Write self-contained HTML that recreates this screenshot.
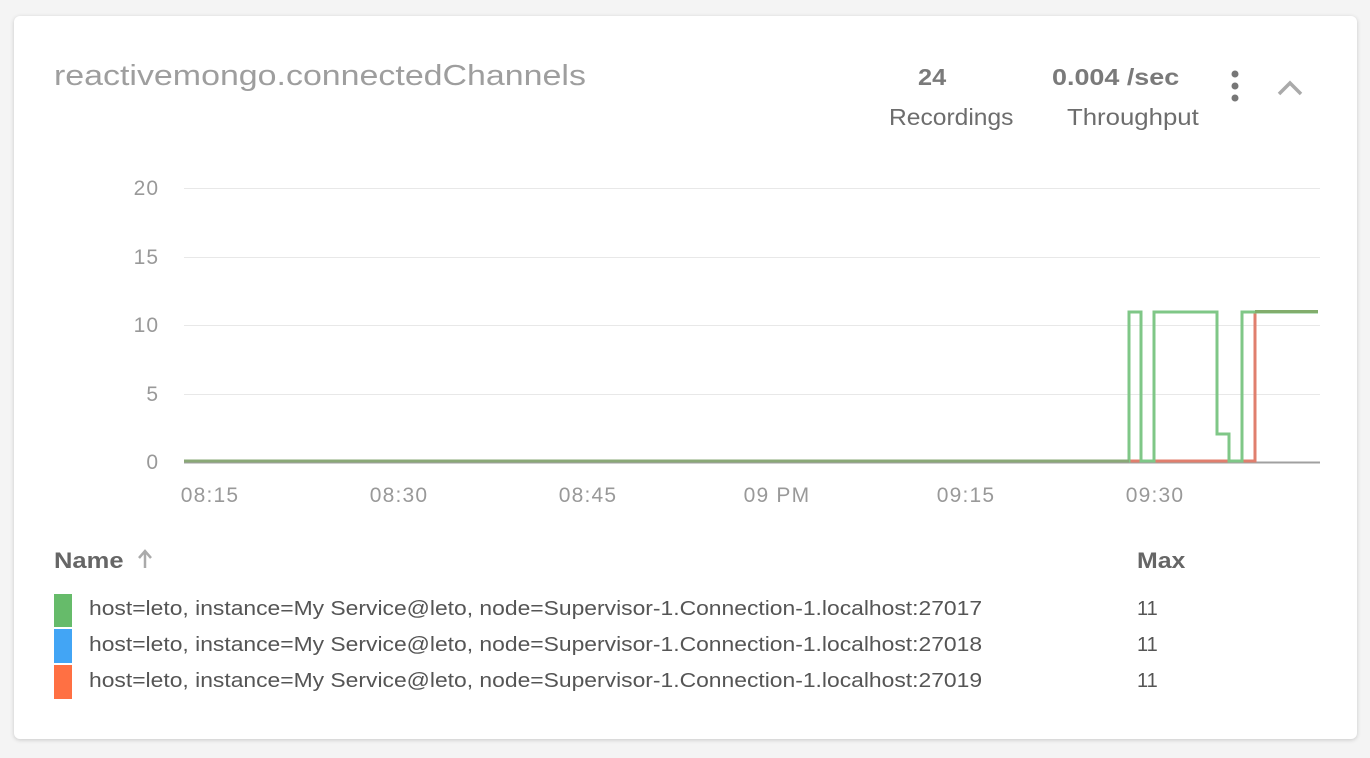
<!DOCTYPE html>
<html><head><style>
body{margin:0;background:#f4f4f4;font-family:"Liberation Sans",sans-serif;width:1370px;height:758px;overflow:hidden;position:relative}
.card{position:absolute;left:14px;top:16px;width:1343px;height:723px;background:#fff;border-radius:6px;box-shadow:0 1px 4px rgba(0,0,0,.18)}
.t{position:absolute;white-space:nowrap;transform-origin:0 0}
</style></head><body>
<div class="card"></div>
<div class="t" style="left:54px;top:60px;font-size:29px;color:#9e9e9e;transform:scaleX(1.17)">reactivemongo.connectedChannels</div>
<div class="t" style="left:918px;top:64px;font-size:23px;font-weight:bold;color:#7a7a7a;transform:scaleX(1.1)">24</div>
<div class="t" style="left:889px;top:104px;font-size:23px;color:#6d6d6d;transform:scaleX(1.07)">Recordings</div>
<div class="t" style="left:1052px;top:64px;font-size:23px;font-weight:bold;color:#7a7a7a;transform:scaleX(1.17)">0.004 /sec</div>
<div class="t" style="left:1067px;top:104px;font-size:23px;color:#6d6d6d;transform:scaleX(1.12)">Throughput</div>
<svg style="position:absolute;left:0;top:0" width="1370" height="758">
<circle cx="1235" cy="74" r="3.5" fill="#777"/><circle cx="1235" cy="86" r="3.5" fill="#777"/><circle cx="1235" cy="98" r="3.5" fill="#777"/>
<path d="M1279 94 L1290 83 L1301 94" stroke="#aaa" stroke-width="3.5" fill="none"/>
<g stroke="#e8e8e8" stroke-width="1"><line x1="184" y1="188.5" x2="1320" y2="188.5"/><line x1="184" y1="257.5" x2="1320" y2="257.5"/><line x1="184" y1="325.5" x2="1320" y2="325.5"/><line x1="184" y1="394.5" x2="1320" y2="394.5"/></g>
<line x1="184" y1="462.5" x2="1320" y2="462.5" stroke="#a0a0a0" stroke-width="2"/>
<g font-size="21" fill="#999" text-anchor="end" font-family="Liberation Sans" letter-spacing="1"><text x="159" y="195">20</text><text x="159" y="264">15</text><text x="159" y="332">10</text><text x="159" y="401">5</text><text x="159" y="469">0</text></g>
<g font-size="21" fill="#999" text-anchor="middle" font-family="Liberation Sans" letter-spacing="1.2"><text x="210" y="502">08:15</text><text x="399" y="502">08:30</text><text x="588" y="502">08:45</text><text x="777" y="502">09 PM</text><text x="966" y="502">09:15</text><text x="1155" y="502">09:30</text></g>
<path d="M184 461 L1255 461 L1255 312 L1318 312" stroke="#e07f6e" stroke-width="3" fill="none"/>
<path d="M184 461 L1129 461 L1129 312 L1141 312 L1141 461 L1154 461 L1154 312 L1217 312 L1217 434 L1229 434 L1229 461 L1242 461 L1242 312 L1318 312" stroke="#7fc787" stroke-width="3" fill="none"/>
<line x1="1255" y1="311.5" x2="1318" y2="311.5" stroke="#82ad6c" stroke-width="3"/>
<line x1="184" y1="461" x2="1129" y2="461" stroke="#8aa877" stroke-width="3"/>
<path d="M145 568 L145 552 M139 558 L145 551 L151 558" stroke="#aaa" stroke-width="2.5" fill="none"/>
<rect x="54" y="594" width="18" height="33" fill="#66bb6a"/>
<rect x="54" y="629" width="18" height="34" fill="#42a5f5"/>
<rect x="54" y="665" width="18" height="34" fill="#ff7043"/>
</svg>
<div class="t" style="left:54px;top:548px;font-size:22px;font-weight:bold;color:#666;transform:scaleX(1.16)">Name</div>
<div class="t" style="left:1137px;top:548px;font-size:22px;font-weight:bold;color:#666;transform:scaleX(1.13)">Max</div>
<div class="t" style="left:89px;top:598px;font-size:20px;color:#555;transform:scaleX(1.143)">host=leto, instance=My Service@leto, node=Supervisor-1.Connection-1.localhost:27017</div>
<div class="t" style="left:89px;top:634px;font-size:20px;color:#555;transform:scaleX(1.143)">host=leto, instance=My Service@leto, node=Supervisor-1.Connection-1.localhost:27018</div>
<div class="t" style="left:89px;top:670px;font-size:20px;color:#555;transform:scaleX(1.143)">host=leto, instance=My Service@leto, node=Supervisor-1.Connection-1.localhost:27019</div>
<div class="t" style="left:1137px;top:598px;font-size:20px;color:#555">11</div>
<div class="t" style="left:1137px;top:634px;font-size:20px;color:#555">11</div>
<div class="t" style="left:1137px;top:670px;font-size:20px;color:#555">11</div>
</body></html>
